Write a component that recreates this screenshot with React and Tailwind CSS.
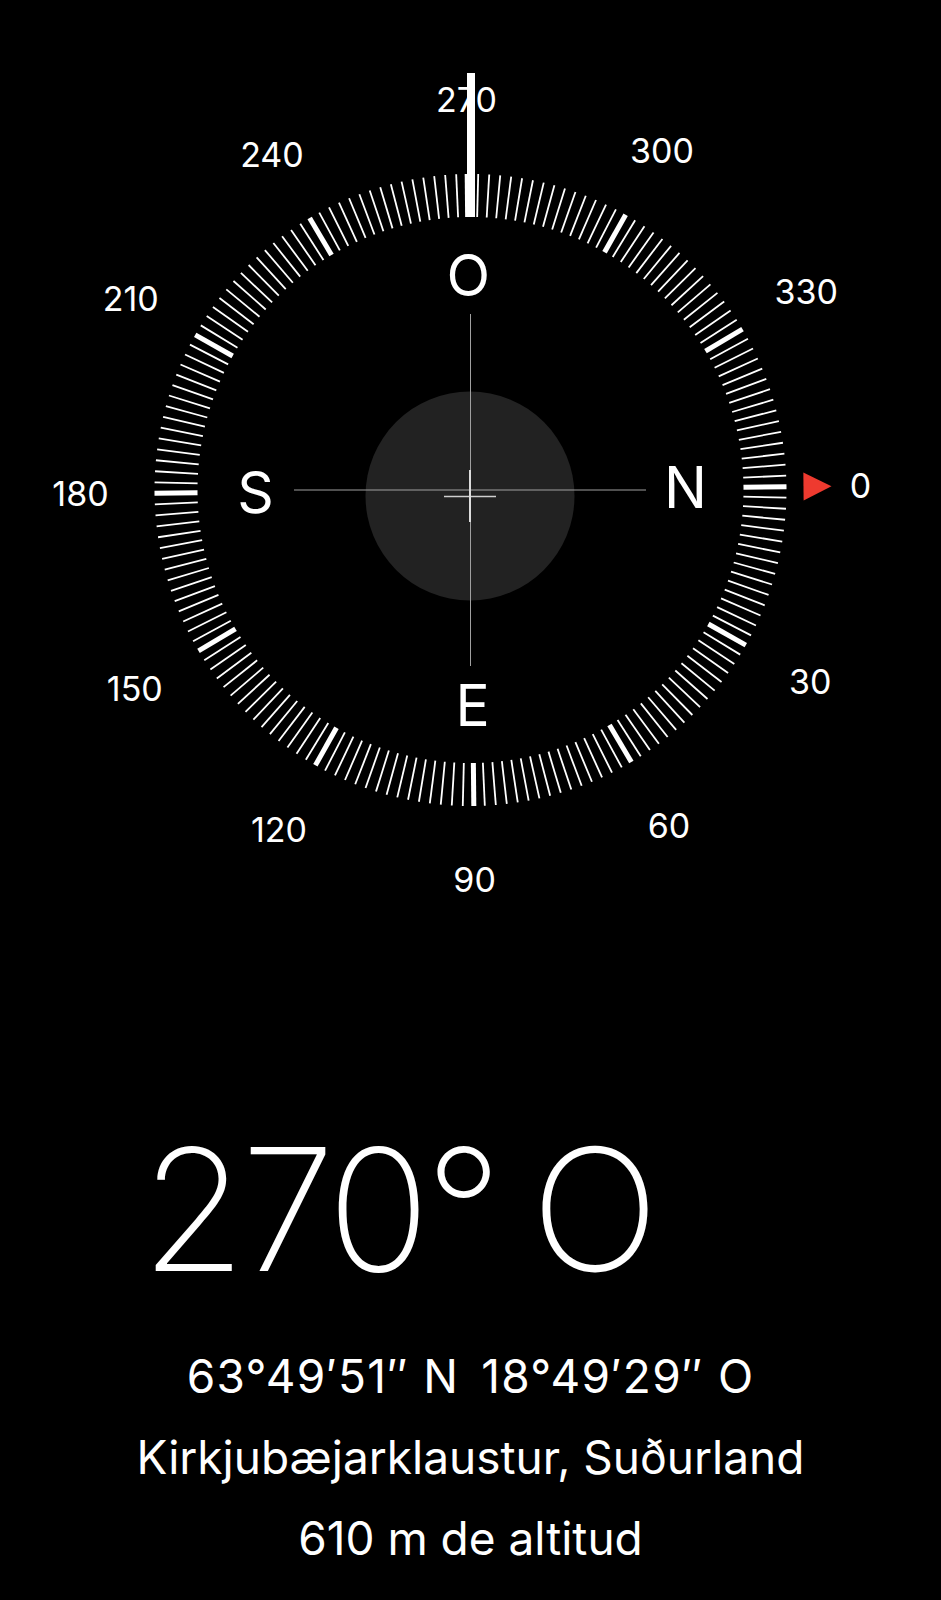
import React from "react";

const CX = 470.5;
const CY = 490;
const ROT = -0.6;

function pt(r, deg) {
  const a = ((deg + ROT) * Math.PI) / 180;
  return [CX + r * Math.cos(a), CY + r * Math.sin(a)];
}

function Compass() {
  const ticks = [];
  for (let d = 0; d < 360; d += 2) {
    const [x1, y1] = pt(273, d);
    const [x2, y2] = pt(316, d);
    const thick = d % 30 === 0;
    ticks.push(
      <line
        key={d}
        x1={x1}
        y1={y1}
        x2={x2}
        y2={y2}
        stroke="#ffffff"
        strokeWidth={thick ? 5 : 1.8}
      />
    );
  }
  const labels = [];
  for (let d = 0; d < 360; d += 30) {
    const [x, y] = pt(390, d);
    labels.push(
      <text
        key={d}
        x={x}
        y={y + 0.3635 * 34}
        textAnchor="middle"
        fontSize="34"
        fill="#ffffff"
      >
        {d}
      </text>
    );
  }
  const cardinals = [
    ["N", 0],
    ["E", 90],
    ["S", 180],
    ["O", 270],
  ].map(([t, d]) => {
    const [x, y] = pt(215, d);
    return (
      <text
        key={t}
        x={x}
        y={y + 0.3635 * 57}
        textAnchor="middle"
        fontSize="57"
        fill="#ffffff"
      >
        {t}
      </text>
    );
  });
  const a = (ROT * Math.PI) / 180;
  const [bx, by] = pt(333, 0);
  const [tx, ty] = pt(361, 0);
  const px = -Math.sin(a) * 14;
  const py = Math.cos(a) * 14;
  const tri = `${bx + px},${by + py} ${bx - px},${by - py} ${tx},${ty}`;

  return (
    <svg
      width="941"
      height="930"
      viewBox="0 0 941 930"
      className="block shrink-0"
    >
      <circle cx="470" cy="496" r="104.5" fill="#222222" />
      <line x1="294" y1="490" x2="646" y2="490" stroke="#a0a0a0" strokeWidth="1" />
      <line x1="470.5" y1="314" x2="470.5" y2="666" stroke="#a0a0a0" strokeWidth="1" />
      <line x1="444" y1="496.5" x2="496" y2="496.5" stroke="#cfcfcf" strokeWidth="1.6" />
      <line x1="470" y1="470" x2="470" y2="522" stroke="#dcdcdc" strokeWidth="2" />
      {ticks}
      {labels}
      {cardinals}
      <polygon points={tri} fill="#ee3a2f" />
      <rect x="467" y="73" width="8" height="144" fill="#ffffff" />
    </svg>
  );
}

export default function App() {
  return (
    <div className="w-full h-[1600px] bg-black text-white flex flex-col overflow-hidden font-['Inter',sans-serif]">
      <Compass />
      <div className="mt-[194px] pl-[141px] text-[170px] leading-none font-extralight tracking-[-5px] whitespace-nowrap">
        270°<span className="tracking-[-14px]"> </span>O
      </div>
      <div className="mt-[42px] flex flex-col items-center text-[46px] leading-[81px] font-normal whitespace-nowrap">
        <div className="flex gap-[22px] tracking-[1.3px]">
          <span>63°49′51″ N</span>
          <span>18°49′29″ O</span>
        </div>
        <div>Kirkjubæjarklaustur, Suðurland</div>
        <div>610 m de altitud</div>
      </div>
    </div>
  );
}
